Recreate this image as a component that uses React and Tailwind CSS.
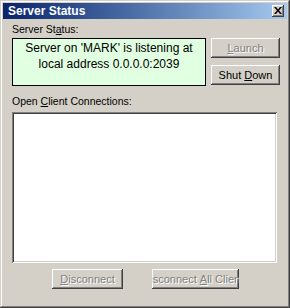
const font = { fontFamily: '"Liberation Sans", Arial, sans-serif' }

const raised =
  'shadow-[inset_-1px_-1px_#404040,inset_1px_1px_#ffffff,inset_-2px_-2px_#808080,inset_2px_2px_#d4d0c8]'

function WinButton({ children, disabled = false, className = '' }) {
  return (
    <div
      className={`flex items-center justify-center overflow-hidden whitespace-nowrap bg-[#d4d0c8] text-[11px] leading-none ${raised} ${
        disabled ? 'text-[#808080] [text-shadow:1px_1px_0_#ffffff]' : 'text-black'
      } ${className}`}
    >
      {children}
    </div>
  )
}

export default function App() {
  return (
    <div
      style={font}
      className="relative flex h-[308px] w-[290px] flex-col bg-[#d4d0c8] p-[3px] shadow-[inset_-1px_-1px_#404040,inset_1px_1px_#d4d0c8,inset_-2px_-2px_#808080,inset_2px_2px_#ffffff]"
    >
      {/* Title bar */}
      <div className="flex h-[16px] items-center justify-between bg-gradient-to-r from-[#0a246a] to-[#a6caf0] pl-[5px] pr-[3px]">
        <span className="text-[12px] font-bold leading-none text-white">Server Status</span>
        <div className={`flex h-[12px] w-[12px] items-center justify-center bg-[#d4d0c8] ${raised}`}>
          <svg width="8" height="7" viewBox="0 0 8 7" className="mb-px">
            <path d="M0 0h2l2 2.5L6 0h2L5 3.5 8 7H6L4 4.5 2 7H0l3-3.5z" fill="#000" />
          </svg>
        </div>
      </div>

      {/* Content */}
      <div className="flex flex-1 flex-col pl-[9px] pr-[7px]">
        <div className="mt-[2px] h-[17px] text-[10.5px] leading-[16px] text-black">
          Server St<u>a</u>tus:
        </div>

        <div className="flex h-[48px] gap-[5px]">
          <div className="w-[194px] border border-black bg-[#e1ffe1] pt-[1px] text-center text-[12px] leading-[16px] text-black">
            Server on 'MARK' is listening at
            <br />
            local address 0.0.0.0:2039
          </div>
          <div className="flex flex-col gap-[7px]">
            <WinButton disabled className="h-[20px] w-[69px]">
              <u>L</u>aunch
            </WinButton>
            <WinButton className="h-[20px] w-[69px]">
              Shut&nbsp;<u>D</u>own
            </WinButton>
          </div>
        </div>

        <div className="mt-[7px] h-[16px] text-[10.5px] leading-[16px] text-black">
          Open <u>C</u>lient Connections:
        </div>

        <div className="mt-[3px] h-[151px] w-[265px] bg-white shadow-[inset_1px_1px_#808080,inset_-1px_-1px_#ffffff,inset_2px_2px_#404040,inset_-2px_-2px_#d4d0c8]" />

        <div className="mt-[6px] flex gap-[29px] pl-[40px]">
          <WinButton disabled className="h-[20px] w-[71px]">
            <u>D</u>isconnect
          </WinButton>
          <WinButton disabled className="h-[20px] w-[87px]">
            Disconnect&nbsp;<u>A</u>ll&nbsp;Clients
          </WinButton>
        </div>
      </div>
    </div>
  )
}
